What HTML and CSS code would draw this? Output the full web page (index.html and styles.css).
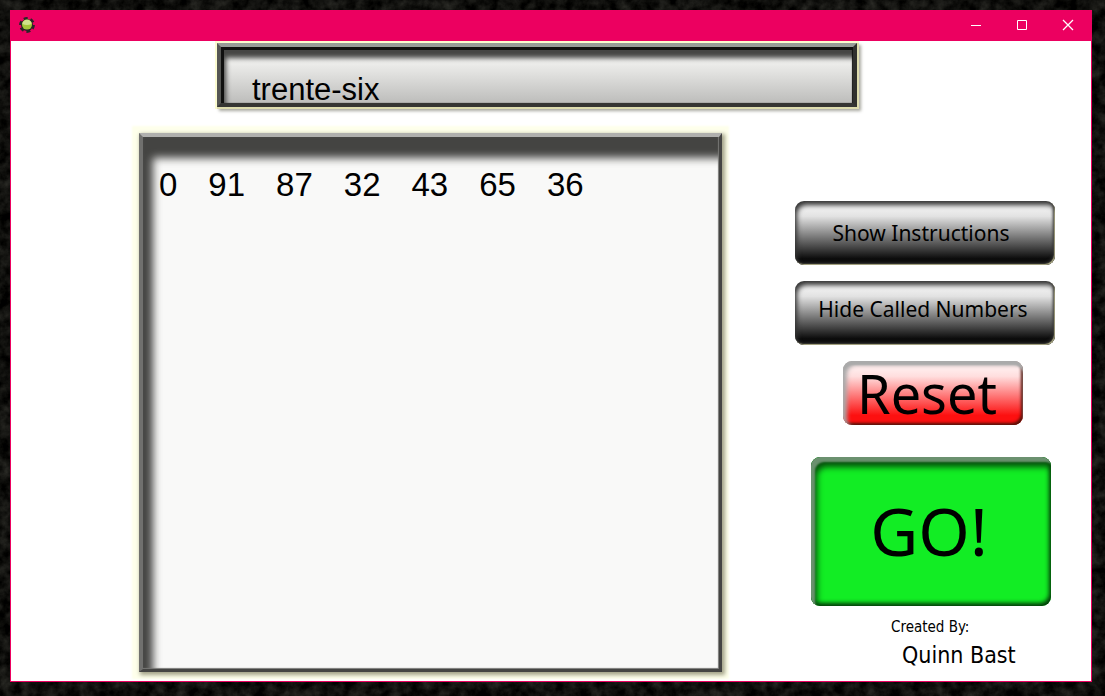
FILE: index.html
```html
<!DOCTYPE html>
<html lang="en">
<head>
<meta charset="utf-8">
<title>French Number Bingo</title>
<link rel="stylesheet" href="styles.css">
</head>
<body>
<svg class="desktop" aria-hidden="true" preserveAspectRatio="none">
  <filter id="grit" x="0" y="0" width="100%" height="100%" color-interpolation-filters="sRGB">
    <feTurbulence type="fractalNoise" baseFrequency="0.09" numOctaves="4" seed="8"/>
    <feColorMatrix values="0.26 0 0 0 -0.07  0.26 0 0 0 -0.07  0.24 0 0 0 -0.07  0 0 0 0 1"/>
  </filter>
  <rect width="100%" height="100%" filter="url(#grit)"/>
</svg>
<div class="window">
  <header class="titlebar">
    <svg class="app-icon" viewBox="0 0 16 16" aria-hidden="true">
      <circle cx="8" cy="8" r="6" fill="#262626"/>
      <circle cx="8" cy="8" r="6.6" fill="none" stroke="#262626" stroke-width="2.6" stroke-dasharray="4 2.9"/>
      <circle cx="8" cy="7.6" r="5" fill="#a4c639"/>
      <path d="M3.4 7a4.6 4.2 0 0 1 9.2 0q-4.6 2-9.2 0z" fill="#d0e38b"/>
    </svg>
    <div class="controls">
      <button class="control" type="button" aria-label="Minimize"><svg viewBox="0 0 10 10"><path d="M0 5.5h10"/></svg></button>
      <button class="control" type="button" aria-label="Maximize"><svg viewBox="0 0 10 10"><path d="M.5.5h9v9h-9z"/></svg></button>
      <button class="control" type="button" aria-label="Close"><svg viewBox="0 0 10 10"><path stroke-width="1.3" d="M0 0l10 10M10 0L0 10"/></svg></button>
    </div>
  </header>
  <main class="game">
    <output class="display">trente-six</output>
    <div class="play">
      <ul class="board">
        <li>0</li><li>91</li><li>87</li><li>32</li><li>43</li><li>65</li><li>36</li>
      </ul>
      <aside class="side">
        <button class="btn dark" type="button">Show Instructions</button>
        <button class="btn dark raised" type="button">Hide Called Numbers</button>
        <button class="btn reset" type="button">Reset</button>
        <button class="btn go" type="button">GO!</button>
        <p class="credit">Created By:</p>
        <p class="author">Quinn Bast</p>
      </aside>
    </div>
  </main>
</div>
</body>
</html>
```
FILE: styles.css
```css
* { box-sizing: border-box; }

body {
  margin: 0;
  min-height: 100vh;
  padding: 10px 13px 14px 10px;
  display: flex;
  background: #10100f;
  color: #000;
  font-family: "Liberation Sans", Arial, sans-serif;
}

.desktop {
  position: fixed;
  inset: 0;
  z-index: -1;
  width: 100%;
  height: 100%;
}

.window {
  flex: 1;
  display: flex;
  flex-direction: column;
  border: 1px solid #ec0060;
  background: #fff;
}

.titlebar {
  height: 30px;
  display: flex;
  justify-content: space-between;
  align-items: center;
  padding: 0 0 2px 8px;
  background: #ec0060;
}

.app-icon { width: 16px; height: 16px; }

.controls { display: flex; height: 100%; }

.control {
  width: 46px;
  padding: 0;
  border: 0;
  background: none;
  display: flex;
  align-items: center;
  justify-content: center;
}

.control svg {
  width: 10px;
  height: 10px;
  overflow: visible;
  fill: none;
  stroke: #fff;
  stroke-width: 1;
}

.game {
  flex: 1;
  display: flex;
  flex-direction: column;
  gap: 26px;
  padding: 2px 36px 9px 128px;
}

.display {
  height: 64px;
  margin: 0 198px 0 78px;
  padding: 25px 0 0 31px;
  border: 4px solid;
  border-color: #989b97 #30302e #353533 #555653;
  background: linear-gradient(#f0f0ef, #ececea 30%, #bdbdbb);
  box-shadow:
    inset 3px 3px 0 #10100f,
    inset -1px 0 1px #10100f,
    inset 5px 11px 5px #464644,
    1px 1px 0 1px #dedcae,
    0 0 0 2px #fbfbd0,
    3px 3px 3px 1px #a8a8a0;
  font-size: 31px;
  line-height: 36px;
}

.play {
  flex: 1;
  display: flex;
  gap: 73px;
}

.board {
  flex: 1;
  display: flex;
  flex-wrap: wrap;
  align-content: flex-start;
  gap: 8px 31px;
  margin: 0;
  padding: 29px 16px 16px 16px;
  list-style: none;
  border: 4px solid;
  border-width: 4px 3px 3px 4px;
  border-color: #b0b0ae #454543 #454543 #70706e;
  background: #f9f9f8;
  box-shadow:
    inset -1px -1px 1px #777775,
    inset 10px 21px 8px #444442,
    2px 2px 4px 1px #a3a388,
    0 0 2px 7px #feffeb;
  font-size: 33px;
  line-height: 38px;
}

.side {
  width: 260px;
  display: flex;
  flex-direction: column;
  padding-top: 68px;
}

.btn {
  height: 64px;
  padding: 0;
  border: 0;
  border-radius: 9px;
  color: #000;
  font-family: "Noto Sans", "Open Sans", sans-serif;
}

.dark {
  margin-bottom: 16px;
  padding: 0 8px 0 0;
  background: linear-gradient(#ededed 14%, #e2e2e2 24%, #0c0c0c 90%);
  box-shadow:
    inset 2px 4px 5px #333,
    inset -1px -1px 1px #b4b28a,
    inset -2px -2px 3px #303030;
  font-size: 21px;
}

.raised { padding: 0 4px 9px 0; }

.reset {
  width: 180px;
  margin: 0 0 32px 48px;
  padding-right: 12px;
  background: linear-gradient(#ffeaea 14%, #ffdede 24%, #fd1010 85%);
  box-shadow:
    inset 0 4px 2px #aaa,
    inset 4px 4px 4px #aaa,
    inset -2px -2px 3px #501208;
  font-size: 54px;
  line-height: 64px;
}

.go {
  width: 240px;
  height: 149px;
  margin-left: 16px;
  padding: 0 4px 3px 0;
  background: #12ed24;
  box-shadow:
    inset 4px 5px 2px #6b916f,
    inset 6px 10px 6px #054d0b,
    inset -2px -3px 4px #033608;
  font-size: 66px;
}

.credit,
.author {
  margin: 0;
  font-family: "DejaVu Sans Condensed", "Noto Sans", sans-serif;
}

.credit {
  margin: 12px 0 0 96px;
  font-size: 15px;
  line-height: 18px;
}

.author {
  margin: 4px 0 0 107px;
  font-size: 23px;
  line-height: 30px;
}
```
